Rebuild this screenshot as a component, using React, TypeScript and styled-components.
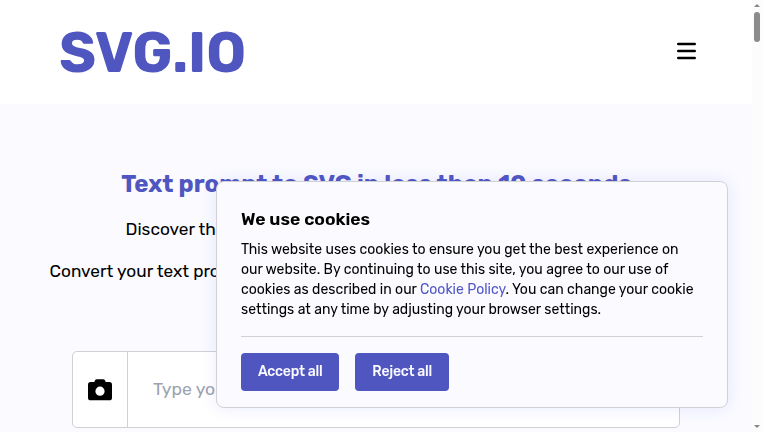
import React from 'react';
import styled, { createGlobalStyle } from 'styled-components';

const accent = '#5056c0';
const line = '#d0d0d5';
const tint = '#fafaff';

const GlobalStyle = createGlobalStyle`
  *, *::before, *::after { box-sizing: border-box; }
  body {
    margin: 0;
    overflow: hidden;
    font-family: Rubik, Roboto, sans-serif;
    color: #000;
    background: ${tint};
  }
  h1, h2, p { margin: 0; }
  button { font: inherit; }
`;

const Viewport = styled.div`
  display: grid;
  grid-template-columns: 1fr 10px;
  height: 432px;
  overflow: hidden;
`;

const Page = styled.div`
  display: flex;
  flex-direction: column;
  min-width: 0;
  overflow: hidden;
`;

const Header = styled.header`
  display: flex;
  align-items: flex-start;
  justify-content: space-between;
  flex: none;
  height: 104px;
  padding: 25px 56px 0 58.5px;
  background: #fff;
`;

const Logo = styled.div`
  font-size: 56px;
  font-weight: 700;
  line-height: 56px;
  color: ${accent};
  will-change: transform;
`;

const MenuButton = styled.button`
  display: flex;
  margin-top: 17px;
  padding: 0;
  border: 0;
  background: none;
`;

const Hero = styled.main`
  display: flex;
  flex-direction: column;
  flex: none;
  padding-top: 64px;
`;

const Title = styled.h1`
  padding-left: 1px;
  font-size: 24px;
  font-weight: 700;
  line-height: 32px;
  text-align: center;
  white-space: nowrap;
  color: ${accent};
`;

const Lead = styled.p<{ $indent: number }>`
  margin-top: 16px;
  padding-left: ${p => p.$indent}px;
  font-size: 17.28px;
  line-height: 26px;
  white-space: nowrap;
`;

const PromptBar = styled.div`
  display: flex;
  width: 608px;
  height: 77px;
  margin: 67px 0 0 72px;
  border: 1px solid ${line};
  border-radius: 5px;
  background: #fff;
`;

const UploadButton = styled.button`
  display: flex;
  align-items: center;
  justify-content: center;
  width: 55px;
  padding: 0;
  border: 0;
  border-right: 1px solid ${line};
  background: none;
`;

const PromptInput = styled.input`
  flex: 1;
  min-width: 0;
  padding: 0 25px 2px;
  border: 0;
  outline: 0;
  font: 400 17.6px Rubik, Roboto, sans-serif;
  background: none;
  &::placeholder { color: #9ca3af; }
`;

const Dialog = styled.section`
  position: fixed;
  right: 34px;
  bottom: 24px;
  width: 512px;
  height: 227px;
  padding: 24px;
  border: 1px solid ${line};
  border-radius: 8px;
  background: ${tint};
  box-shadow: 0 0 16px rgba(80, 86, 255, 0.12);
  will-change: transform;
`;

const DialogTitle = styled.h2`
  margin-top: 1px;
  font-size: 17.6px;
  font-weight: 600;
  line-height: 25px;
`;

const DialogText = styled.p`
  margin-top: 8px;
  font-size: 14px;
  line-height: 20px;
`;

const PolicyLink = styled.a`
  color: #5056c8;
`;

const Actions = styled.div`
  display: flex;
  gap: 16px;
  margin-top: 16px;
  padding-top: 16px;
  border-top: 1px solid ${line};
`;

const ActionButton = styled.button`
  height: 38px;
  padding: 0 17px 2px;
  border: 0;
  border-radius: 4px;
  font-size: 14px;
  font-weight: 500;
  letter-spacing: -0.25px;
  white-space: nowrap;
  color: ${tint};
  background: ${accent};
`;

const ScrollTrack = styled.div`
  display: flex;
  flex-direction: column;
  align-items: center;
  padding: 4px 0;
  background: #fcfcfc;
`;

const ScrollThumb = styled.div`
  width: 6px;
  height: 30px;
  margin: 5px 0 auto;
  border-radius: 3px;
  background: #8b8b8b;
`;

export default function App() {
  return (
    <>
      <GlobalStyle />
      <Viewport>
        <Page>
          <Header>
            <Logo>SVG.IO</Logo>
            <MenuButton aria-label="Menu">
              <svg width="19" height="18" viewBox="0 0 19 18">
                <path d="M1.300 2h16.400M1.300 9h16.400M1.300 16h16.400" stroke="#000" strokeWidth="2.600" strokeLinecap="round" />
              </svg>
            </MenuButton>
          </Header>
          <Hero>
            <Title>Text prompt to SVG in less than 10 seconds</Title>
            <Lead $indent={125.5}>Discover the</Lead>
            <Lead $indent={49.5}>Convert your text prompt</Lead>
            <PromptBar>
              <UploadButton aria-label="Upload image">
                <svg width="24" height="22" viewBox="0 0 24 22">
                  <path
                    fillRule="evenodd"
                    d="M9 0.300h6a2.400 2.400 0 0 1 2.100 1.300l.6 1.300H21.400A2.600 2.600 0 0 1 24 5.500V18.700A2.600 2.600 0 0 1 21.400 21.300H2.600A2.600 2.600 0 0 1 0 18.700V5.500A2.600 2.600 0 0 1 2.600 2.900H6.300L6.900 1.600A2.400 2.400 0 0 1 9 .3ZM12 7.600a4.600 4.600 0 1 0 0 9.200a4.600 4.600 0 1 0 0-9.200Z"
                  />
                </svg>
              </UploadButton>
              <PromptInput placeholder="Type your prompt" />
            </PromptBar>
          </Hero>
        </Page>
        <ScrollTrack>
          <svg width="6" height="3" viewBox="0 0 6 3"><path d="M3 0 6 3H0Z" fill="#858585" /></svg>
          <ScrollThumb />
          <svg width="6" height="3" viewBox="0 0 6 3"><path d="M3 3 6 0H0Z" fill="#858585" /></svg>
        </ScrollTrack>
      </Viewport>
      <Dialog>
        <DialogTitle>We use cookies</DialogTitle>
        <DialogText>
          This website uses cookies to ensure you get the best experience on our website. By continuing to use this
          site, you agree to our use of cookies as described in our <PolicyLink>Cookie Policy</PolicyLink>. You can
          change your cookie settings at any time by adjusting your browser settings.
        </DialogText>
        <Actions>
          <ActionButton>Accept all</ActionButton>
          <ActionButton>Reject all</ActionButton>
        </Actions>
      </Dialog>
    </>
  );
}
